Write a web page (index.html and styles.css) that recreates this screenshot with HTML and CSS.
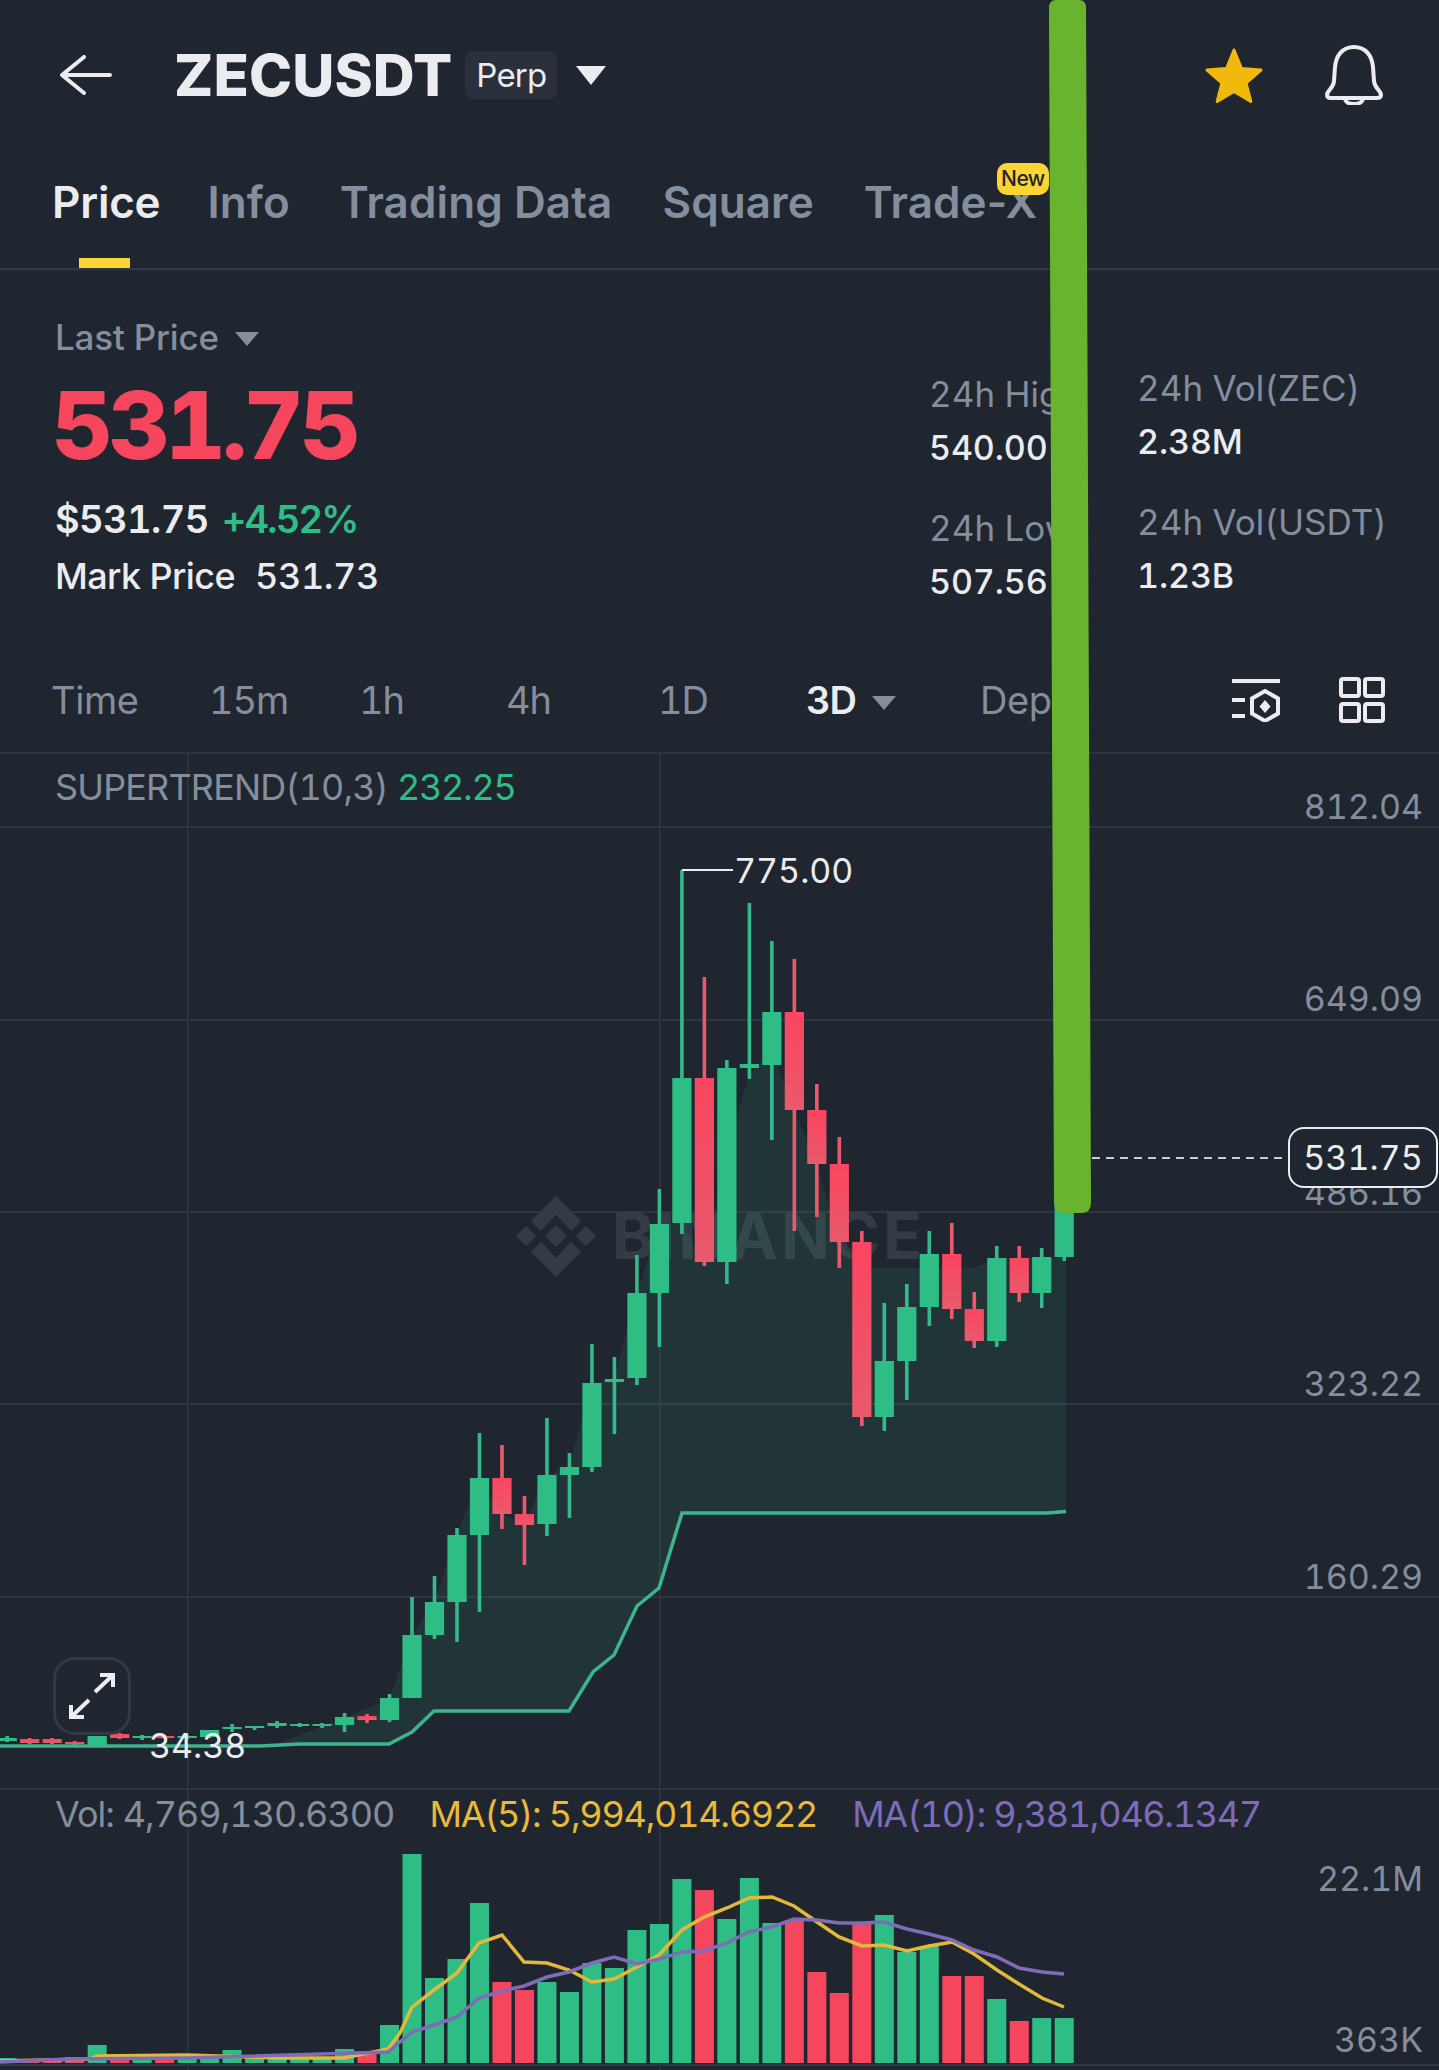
FILE: index.html
```html
<!DOCTYPE html>
<html lang="en">
<head>
  <meta charset="UTF-8">
  <title>ZECUSDT Perp</title>
  <link rel="stylesheet" href="styles.css">
</head>
<body>
  <div class="page">
    <header class="topbar">
      <svg class="back-icon" viewBox="0 0 52 40"><path d="M50 20H3M24 2L2 20l22 18"/></svg>
      <span class="symbol">ZECUSDT</span>
      <span class="perp">Perp</span>
      <span class="caret caret-white"></span>
      <div class="topbar-right">
        <svg class="star-icon" viewBox="0 0 60 56"><path d="M30 3l7.5 18.5 19.5 1.500-15 13 4.800 18.500L30 44.500 13.200 54.500 18 36 3 23l19.500-1.500z"/></svg>
        <svg class="bell-icon" viewBox="0 0 58 60"><path d="M29 2C17 2 11 11 10 22l-1 14c-.5 7-7 10-7 14 0 2 1.500 3 4 3h46c2.500 0 4-1 4-3 0-4-6.500-7-7-14l-1-14C47 11 41 2 29 2z"/><path d="M20 53c0 4 4 6 9 6s9-2 9-6"/></svg>
      </div>
    </header>

    <nav class="tabs">
      <a class="tab active">Price</a>
      <a class="tab">Info</a>
      <a class="tab">Trading Data</a>
      <a class="tab">Square</a>
      <a class="tab">Trade-X<span class="new-badge">New</span></a>
    </nav>

    <section class="stats">
      <div class="stats-main">
        <div class="last-label">Last Price <span class="caret caret-grey"></span></div>
        <div class="last-price">531.75</div>
        <div class="usd-row"><span>$531.75</span><span class="up change">+4.52%</span></div>
        <div class="mark-row"><span>Mark Price</span><span class="mark-value">531.73</span></div>
      </div>
      <div class="stats-col col-range">
        <div class="stat"><div class="stat-label">24h High</div><div class="stat-value">540.00</div></div>
        <div class="stat"><div class="stat-label">24h Low</div><div class="stat-value">507.56</div></div>
      </div>
      <div class="stats-col col-vol">
        <div class="stat"><div class="stat-label">24h Vol(ZEC)</div><div class="stat-value">2.38M</div></div>
        <div class="stat"><div class="stat-label">24h Vol(USDT)</div><div class="stat-value">1.23B</div></div>
      </div>
    </section>

    <div class="timebar">
      <span class="time time-word">Time</span>
      <span class="time">15m</span>
      <span class="time">1h</span>
      <span class="time">4h</span>
      <span class="time">1D</span>
      <span class="time current">3D <span class="caret caret-grey"></span></span>
      <span class="time time-word">Depth</span>
      <div class="timebar-icons">
        <svg class="tool-icon" viewBox="0 0 48 44"><path d="M0 3h48M0 22h13M0 38h13"/><path d="M33 13l13 7.500v15L33 43l-13-7.500v-15z"/><path class="solid" d="M33 22l5.500 6.500L33 35l-5.500-6.500z"/></svg>
        <svg class="grid-icon" viewBox="0 0 46 46"><rect x="2" y="2" width="18" height="17" rx="2"/><rect x="26" y="2" width="18" height="17" rx="2"/><rect x="2" y="27" width="18" height="17" rx="2"/><rect x="26" y="27" width="18" height="17" rx="2"/></svg>
      </div>
    </div>

    <div class="chart">
      <svg id="chart-svg" class="chart-svg" viewBox="0 754 1439 1316"></svg>
      <div class="legend legend-trend">SUPERTREND(10,3) <span class="up">232.25</span></div>
      <div class="legend legend-vol">
        <span>Vol: 4,769,130.6300</span>
        <span class="ma5">MA(5): 5,994,014.6922</span>
        <span class="ma10">MA(10): 9,381,046.1347</span>
      </div>
      <div class="price-tag">531.75</div>
      <div class="expand-btn">
        <svg class="expand-icon" viewBox="0 0 50 48"><path d="M28 20L46 3M33 3h13v12M22 28L4 45M4 33v12h13"/></svg>
      </div>
    </div>

    <svg class="marker" viewBox="0 0 1439 2070"><path d="M1056 0q-7 0-7 8L1054 1203q0 10 10 10h17q10 0 10-10L1086 8q0-8-7-8z"/></svg>
  </div>
  <script src="chart.js"></script>
</body>
</html>
```

FILE: styles.css
```css
* { box-sizing: border-box; }
body { margin: 0; background: #202630; color: #eaecef; font-family: Inter, "Liberation Sans", sans-serif; font-variant-numeric: tabular-nums; }
.page { position: relative; width: 1439px; height: 2070px; overflow: hidden; background: #202630; }

.topbar { display: flex; align-items: center; height: 150px; padding: 0 56px 0 60px; }
.back-icon { width: 52px; height: 40px; fill: none; stroke: #eaecef; stroke-width: 4; stroke-linecap: round; stroke-linejoin: round; }
.symbol { margin-left: 62px; font-size: 58px; font-weight: 800; letter-spacing: .1px; }
.perp { margin-left: 13px; padding: 0 11px; height: 48px; line-height: 48px; border-radius: 8px; background: #2b313c; font-size: 33px; letter-spacing: -.8px; }
.caret { display: inline-block; width: 0; height: 0; border-style: solid; border-color: transparent; }
.caret-white { margin-left: 19px; border-width: 19px 15px 0; border-top-color: #eaecef; }
.caret-grey { margin-left: 7px; border-width: 14px 12px 0; border-top-color: #848e9c; vertical-align: 4px; }
.topbar-right { display: flex; align-items: center; gap: 61px; margin-left: auto; }
.star-icon { width: 60px; height: 56px; fill: #f0b90b; stroke: #f0b90b; stroke-width: 3; stroke-linejoin: round; }
.bell-icon { width: 58px; height: 60px; fill: none; stroke: #eaecef; stroke-width: 4; stroke-linejoin: round; }

.tabs { display: flex; gap: 50px; height: 120px; padding: 30px 0 0 52px; border-bottom: 2px solid #333a46; }
.tab { position: relative; height: 88px; line-height: 44px; font-size: 44px; font-weight: 600; font-variant-numeric: normal; letter-spacing: .1px; color: #848e9c; }
.tab.active { margin-right: -3px; letter-spacing: -.2px; color: #eaecef; }
.tab.active::after { content: ""; position: absolute; left: 27px; bottom: 0; width: 51px; height: 10px; background: #fcd535; }
.new-badge { position: absolute; left: 133px; top: -17px; width: 52px; height: 32px; line-height: 32px; text-align: center; border-radius: 10px; background: #fcd535; color: #202630; font-size: 21px; font-weight: 500; letter-spacing: -.6px; }

.stats { display: flex; height: 370px; padding-left: 55px; }
.stats-main { width: 874px; }
.last-label { margin-top: 47px; line-height: 40px; font-size: 35px; font-weight: 500; letter-spacing: -.2px; color: #848e9c; }
.last-price { margin-top: 23px; margin-left: -3px; line-height: 90px; font-size: 94px; font-weight: 800; letter-spacing: -4px; color: #f6465d; }
.usd-row { display: flex; gap: 13px; margin-top: 27px; line-height: 44px; font-size: 38px; font-weight: 600; letter-spacing: -.6px; }
.change { letter-spacing: -1.8px; }
.mark-row { display: flex; gap: 20px; margin-top: 15px; line-height: 40px; font-size: 36px; font-weight: 500; letter-spacing: -.6px; }
.mark-value { letter-spacing: -.4px; }
.up { color: #2ebd85; }
.stats-col { display: flex; flex-direction: column; gap: 40px; }
.col-range { width: 208px; padding-top: 104px; }
.col-vol { padding-top: 98px; }
.stat-label { line-height: 40px; font-size: 35px; letter-spacing: 0; color: #848e9c; white-space: nowrap; }
.stat-value { margin-top: 14px; line-height: 40px; font-size: 34px; font-weight: 500; letter-spacing: -.1px; }

.timebar { display: grid; grid-template-columns: 158px 150px 147px 152px 148px 174px 1fr 207px; align-items: center; height: 114px; padding: 8px 0 0 51px; border-bottom: 2px solid #2d3440; }
.time { font-size: 38px; letter-spacing: -1.2px; color: #848e9c; }
.time-word { letter-spacing: -.4px; }
.time.current { color: #eaecef; font-weight: 600; }
.timebar-icons { display: flex; align-items: center; gap: 59px; }
.tool-icon { width: 48px; height: 44px; fill: none; stroke: #eaecef; stroke-width: 4; }
.tool-icon .solid { fill: #eaecef; stroke: none; }
.grid-icon { width: 46px; height: 46px; fill: none; stroke: #eaecef; stroke-width: 4; }

.chart { position: relative; height: 1316px; }
.chart-svg { display: block; width: 1439px; height: 1316px; }
.chart-svg text { font-family: Inter, "Liberation Sans", sans-serif; }
.axis-label { font-size: 34px; fill: #848e9c; }
.peak-label { font-size: 34px; fill: #eaecef; }
.watermark { font-size: 64px; font-weight: 700; fill: #343b45; letter-spacing: 3px; }
.legend { position: absolute; left: 55px; font-size: 36px; line-height: 44px; letter-spacing: -.85px; color: #848e9c; white-space: nowrap; }
.legend .up { letter-spacing: -1.3px; }
.legend-trend { top: 11px; }
.legend-vol { top: 1038px; display: flex; gap: 35px; letter-spacing: -1px; }
.ma5 { letter-spacing: -1.25px; color: #e8b93a; }
.ma10 { letter-spacing: -1.3px; color: #7e6cb8; }
.price-tag { position: absolute; left: 1288px; top: 373px; width: 150px; height: 61px; line-height: 58px; text-align: center; border: 2px solid #eaecef; border-radius: 16px; background: #202630; font-size: 34px; }
.expand-btn { position: absolute; left: 53px; top: 903px; display: flex; align-items: center; justify-content: center; width: 78px; height: 78px; border: 3px solid #333a46; border-radius: 22px; }
.expand-icon { width: 50px; height: 48px; fill: none; stroke: #eaecef; stroke-width: 4; }

.marker { position: absolute; left: 0; top: 0; width: 1439px; height: 2070px; pointer-events: none; }
.marker path { fill: #69b42f; }
```

FILE: chart.js
```js
const NS = "http://www.w3.org/2000/svg";
const svg = document.getElementById("chart-svg");
const GREEN = "#2ebd85", RED = "#f6465d";
const START = 7.2, STEP = 22.49;

function add(tag, attrs, text) {
  const el = document.createElementNS(NS, tag);
  for (const k in attrs) el.setAttribute(k, attrs[k]);
  if (text) el.textContent = text;
  svg.appendChild(el);
  return el;
}

// wick top, body top, body bottom, wick bottom, color, volume top
const candles = [
  [1736,1738,1741,1742,"g",2058],[1738,1739,1743,1744,"r",2059],[1738,1739,1743,1744,"r",2059],[1741,1742,1744,1745,"r",2057],
  [1736,1736,1745,1745,"g",2045],[1733,1734,1738,1739,"r",2057],[1735,1736,1738,1740,"g",2058],[1735,1736,1738,1739,"r",2057],
  [1735,1736,1738,1739,"g",2057],[1730,1730,1737,1738,"g",2057],[1724,1727,1729,1732,"g",2050],[1726,1726,1728,1730,"g",2058],
  [1721,1723,1726,1728,"g",2057],[1723,1724,1726,1727,"g",2058],[1723,1724,1726,1728,"g",2059],[1713,1717,1725,1732,"g",2049],
  [1714,1716,1720,1723,"r",2052],[1694,1698,1720,1722,"g",2025],[1597,1635,1698,1698,"g",1854],[1576,1602,1635,1639,"g",1978],
  [1528,1535,1602,1642,"g",1959],[1433,1478,1535,1612,"g",1903],[1445,1478,1514,1529,"r",1982],[1496,1514,1525,1565,"r",1990],
  [1418,1475,1524,1536,"g",1982],[1453,1467,1475,1518,"g",1992],[1344,1383,1467,1472,"g",1963],[1357,1379,1382,1434,"g",1968],
  [1255,1293,1378,1385,"g",1930],[1189,1224,1293,1347,"g",1924],[870,1078,1223,1234,"g",1879],[977,1078,1262,1266,"r",1890],
  [1060,1068,1262,1284,"g",1919],[903,1064,1068,1079,"g",1878],[941,1012,1065,1140,"g",1923],[959,1012,1110,1231,"r",1920],
  [1084,1110,1164,1217,"r",1972],[1137,1164,1242,1268,"r",1993],[1231,1242,1417,1426,"r",1922],[1303,1361,1417,1431,"g",1915],
  [1284,1307,1361,1400,"g",1952],[1231,1254,1307,1326,"g",1946],[1223,1254,1309,1319,"r",1976],[1292,1309,1341,1348,"r",1976],
  [1246,1258,1341,1347,"g",1999],[1246,1258,1293,1302,"r",2021],[1248,1257,1293,1308,"g",2018],[1158,1160,1257,1261,"g",2018]
];

const trend = "0,1746 260,1746 300,1744 389,1744 412,1732 434,1711 569,1711 593,1672 614,1655 637,1606 659,1588 682,1513 1047,1513 1066,1511.500";
const trendTop = "277,1744 389,1700 412,1635 434,1602 457,1535 479,1478 502,1514 524,1525 547,1475 569,1467 592,1383 614,1380 637,1293 659,1224 682,1223 704,1262 736,1120 749,1075 772,1050 794,1110 817,1164 839,1242 862,1268 974,1268 997,1258 1066,1258 1066,1511.500";
const trendBottom = "1047,1513 682,1513 659,1588 637,1606 614,1655 593,1672 569,1711 434,1711 412,1732 389,1744";
const ma5 = "0,2061 90,2059 97,2056 187,2055 277,2058 344,2058 388,2049 400,2033 412,2007 434,1990 457,1973 479,1943 502,1935 524,1962 547,1963 569,1970 592,1982 614,1979 637,1967 659,1955 682,1930 704,1917 727,1908 749,1898 772,1897 794,1906 817,1922 839,1937 862,1946 884,1945 907,1951 929,1946 952,1942 974,1954 997,1970 1019,1984 1042,1998 1064,2007";
const ma10 = "0,2062 70,2059 187,2058 388,2052 400,2042 412,2032 434,2025 457,2017 479,1998 502,1991 524,1986 547,1977 569,1972 592,1963 614,1957 637,1964 659,1959 682,1952 704,1951 727,1943 749,1932 772,1927 794,1919 817,1920 839,1923 862,1923 884,1922 907,1929 929,1934 952,1940 974,1950 997,1957 1019,1968 1042,1972 1064,1974";

const defs = add("defs", {});
const grad = document.createElementNS(NS, "linearGradient");
grad.id = "red-body";
grad.setAttribute("x1", "0"); grad.setAttribute("y1", "0"); grad.setAttribute("x2", "0"); grad.setAttribute("y2", "1");
[["0", "#fb4560"], ["1", "#e85a6c"]].forEach(s => {
  const stop = document.createElementNS(NS, "stop");
  stop.setAttribute("offset", s[0]); stop.setAttribute("stop-color", s[1]);
  grad.appendChild(stop);
});
defs.appendChild(grad);

// grid
[826, 1019, 1211, 1403, 1596, 1788, 2064].forEach(y => add("rect", { x: 0, y: y, width: 1439, height: 2, fill: "#2f3641" }));
[187, 659].forEach(x => add("rect", { x: x, y: 754, width: 1.500, height: 1316, fill: "#2f3641" }));

// watermark
add("path", { fill: "#343b45", d: "M556 1196L581 1221 571 1231 556 1215 541 1231 531 1221zM556 1277L581 1252 571 1242 556 1258 541 1242 531 1252zM516 1236l10-10 10 10-10 10zM545 1236l11-11 11 11-11 11zM576 1236l10-10 10 10-10 10z" });
add("text", { x: 612, y: 1259, class: "watermark" }, "BINANCE");

add("polygon", { points: trendTop + " " + trendBottom, fill: "rgba(46,189,133,.1)" });

// candles and volume
candles.forEach((c, i) => {
  const x = START + i * STEP;
  const color = c[4] === "g" ? GREEN : RED;
  add("rect", { x: x - 1.800, y: c[0], width: 3.600, height: c[3] - c[0], fill: c[4] === "g" ? "#35b88a" : "#e85a6c" });
  add("rect", { x: x - 9.600, y: c[1], width: 19.200, height: Math.max(c[2] - c[1], 2), fill: c[4] === "g" ? GREEN : "url(#red-body)" });
  add("rect", { x: x - 9.500, y: c[5], width: 19, height: 2063 - c[5], fill: color });
});

add("polyline", { points: trend, fill: "none", stroke: "#3bb58c", "stroke-width": 3.500 });
add("polyline", { points: ma5, fill: "none", stroke: "#e2b93b", "stroke-width": 3.500 });
add("polyline", { points: ma10, fill: "none", stroke: "#7e6cb8", "stroke-width": 3.500 });

// price lines and labels
add("path", { d: "M682 870H733", stroke: "#eaecef", "stroke-width": 2, fill: "none" });
add("text", { x: 734, y: 883, class: "peak-label" }, "775.00");
add("text", { x: 149, y: 1758, class: "peak-label" }, "34.38");
add("path", { d: "M1092 1158H1288", stroke: "#c9ced6", "stroke-width": 2, "stroke-dasharray": "8 6", fill: "none" });

[["812.04", 819], ["649.09", 1011], ["486.16", 1205], ["323.22", 1396], ["160.29", 1589], ["22.1M", 1891], ["363K", 2052]].forEach(a => {
  add("text", { x: 1423, y: a[1], "text-anchor": "end", class: "axis-label" }, a[0]);
});
```
